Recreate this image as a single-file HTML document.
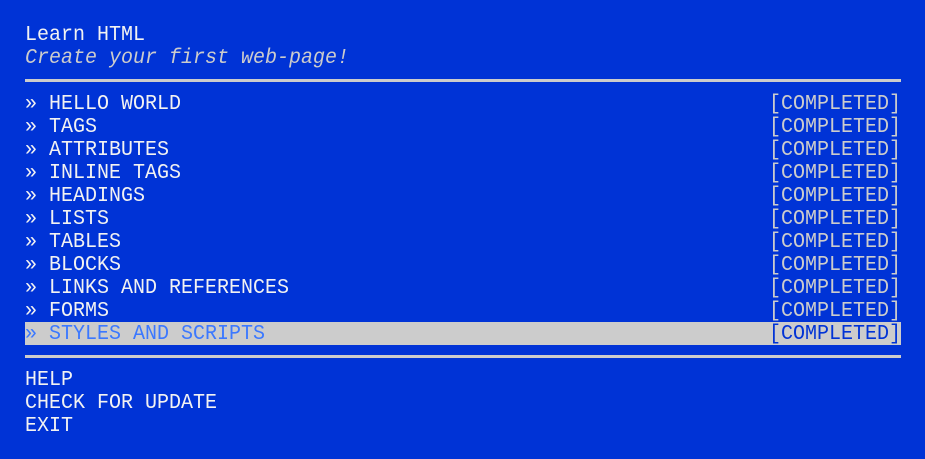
<!DOCTYPE html>
<html><head><style>
body{margin:0;width:925px;height:459px;background:#0033d6;overflow:hidden;font-family:"Liberation Mono",monospace;font-size:20px;color:#f2f2f2;position:relative}
.r{position:absolute;left:25px;width:876px;height:23px;line-height:23px;white-space:pre}
.t{display:inline-block;transform:translateY(1px) scaleY(1.08);transform-origin:50% 60%}
.s{position:absolute;right:0;top:0;color:#cccccc}
.hl{background:#cccccc;color:#3b78ff}
.hl .s{color:#0033d6}
.hr{position:absolute;left:25px;width:876px;height:3px;background:#cccccc}
i{color:#cccccc}
</style></head><body>
<div class="r" style="top:23px"><span class="t">Learn HTML</span></div>
<div class="r" style="top:46px"><i class="t">Create your first web-page!</i></div>
<div class="hr" style="top:79px"></div>
<div class="r" style="top:92px"><span class="t">» HELLO WORLD</span><span class="s t">[COMPLETED]</span></div>
<div class="r" style="top:115px"><span class="t">» TAGS</span><span class="s t">[COMPLETED]</span></div>
<div class="r" style="top:138px"><span class="t">» ATTRIBUTES</span><span class="s t">[COMPLETED]</span></div>
<div class="r" style="top:161px"><span class="t">» INLINE TAGS</span><span class="s t">[COMPLETED]</span></div>
<div class="r" style="top:184px"><span class="t">» HEADINGS</span><span class="s t">[COMPLETED]</span></div>
<div class="r" style="top:207px"><span class="t">» LISTS</span><span class="s t">[COMPLETED]</span></div>
<div class="r" style="top:230px"><span class="t">» TABLES</span><span class="s t">[COMPLETED]</span></div>
<div class="r" style="top:253px"><span class="t">» BLOCKS</span><span class="s t">[COMPLETED]</span></div>
<div class="r" style="top:276px"><span class="t">» LINKS AND REFERENCES</span><span class="s t">[COMPLETED]</span></div>
<div class="r" style="top:299px"><span class="t">» FORMS</span><span class="s t">[COMPLETED]</span></div>
<div class="r hl" style="top:322px"><span class="t">» STYLES AND SCRIPTS</span><span class="s t">[COMPLETED]</span></div>
<div class="hr" style="top:355px"></div>
<div class="r" style="top:368px"><span class="t">HELP</span></div>
<div class="r" style="top:391px"><span class="t">CHECK FOR UPDATE</span></div>
<div class="r" style="top:414px"><span class="t">EXIT</span></div>
</body></html>
